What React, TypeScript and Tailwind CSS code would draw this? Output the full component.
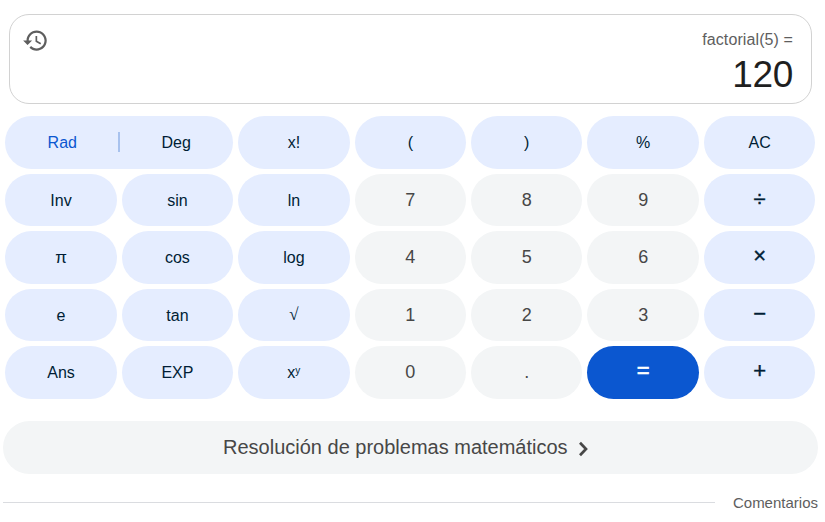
import type { ReactNode } from "react";
import clsx from "clsx";

type Kind = "fn" | "digit" | "op" | "equals";

interface Key {
  label: ReactNode;
  name: string;
  kind: Kind;
}

const key = (name: string, kind: Kind, label: ReactNode = name): Key => ({ name, kind, label });

const power = (
  <span className="flex">
    x<span className="text-[10px] leading-5">y</span>
  </span>
);

const keys: Key[] = [
  key("x!", "fn"), key("(", "fn"), key(")", "fn"), key("%", "fn"), key("AC", "fn"),
  key("Inv", "fn"), key("sin", "fn"), key("ln", "fn"), key("7", "digit"), key("8", "digit"), key("9", "digit"), key("÷", "op"),
  key("π", "fn", <span className="-mt-0.5 text-[17px]">π</span>), key("cos", "fn"), key("log", "fn"), key("4", "digit"), key("5", "digit"), key("6", "digit"), key("×", "op"),
  key("e", "fn"), key("tan", "fn"), key("√", "fn", <span className="-mt-0.5 font-[Liberation_Serif] text-[17px]">√</span>), key("1", "digit"), key("2", "digit"), key("3", "digit"), key("−", "op"),
  key("Ans", "fn"), key("EXP", "fn"), key("xy", "fn", power), key("0", "digit"), key(".", "digit"), key("=", "equals"), key("+", "op"),
];

const styles: Record<Kind, string> = {
  fn: "bg-[#e5edff] pt-0.5 text-base text-[#001d35]",
  digit: "bg-[#f3f5f6] text-lg text-[#474747]",
  op: "bg-[#e5edff] pb-[3px] text-[22px] text-[#001d35] [-webkit-text-stroke:0.4px]",
  equals: "bg-[#0b57d0] pb-[3px] text-[22px] text-white [-webkit-text-stroke:0.6px]",
};

function Display() {
  return (
    <div className="ml-[9px] flex h-[90px] w-[803px] justify-between rounded-[20px] border border-[#d2d2d2] pt-[14px] pr-[18px] pl-[14px]">
      <svg viewBox="0 0 24 24" className="-mt-0.5 -ml-[2px] h-[27px] w-[27px] fill-[#5e5e5e]">
        <path d="M13 3c-4.97 0-9 4.03-9 9H1l3.89 3.89.07.14L9 12H6c0-3.87 3.13-7 7-7s7 3.13 7 7-3.13 7-7 7c-1.93 0-3.68-.79-4.94-2.06l-1.42 1.42C8.27 19.99 10.51 21 13 21c4.97 0 9-4.03 9-9s-4.03-9-9-9zm-1 5v5l4.28 2.54.72-1.21-3.5-2.08V8H12z" />
      </svg>
      <div className="text-right">
        <div className="text-base leading-[22px] tracking-[0.1px] text-[#5e5e5e]">factorial(5) =</div>
        <div className="text-[37px] leading-[48px] tracking-[-0.3px] text-[#1f1f1f]">120</div>
      </div>
    </div>
  );
}

export default function App() {
  return (
    <main className="h-[522px] w-[825px] overflow-hidden bg-white pt-[14px] font-['Liberation_Sans',Arial,sans-serif]">
      <Display />
      <div className="mt-3 ml-[5.3px] grid h-[282.6px] w-[810px] grid-cols-7 grid-rows-5 gap-[5px]">
        <div className="col-span-2 flex items-center rounded-full bg-[#e5edff] text-base text-[#001d35]">
          <button className="flex-1 pt-0.5 pl-px text-[#0b57d0]">Rad</button>
          <span className="h-5 w-0.5 bg-[#a8c2ee]" />
          <button className="flex-1 pt-0.5 pr-px">Deg</button>
        </div>
        {keys.map((k) => (
          <button key={k.name} className={clsx("flex items-center justify-center rounded-full", styles[k.kind])}>
            {k.label}
          </button>
        ))}
      </div>
      <button className="mt-[22px] ml-[3px] flex h-[53px] w-[815px] items-center rounded-full bg-[#f3f5f6] pl-[220px] text-xl text-[#474747]">
        Resolución de problemas matemáticos
        <svg viewBox="0 0 10 16" className="mt-[3px] ml-[10px] h-4 w-[10px] fill-none stroke-[#474747] stroke-[2.7]">
          <path d="M2 1.8 8 8l-6 6.2" />
        </svg>
      </button>
      <div className="mt-[18px] ml-[3px] flex h-[22px] w-[815px] items-center justify-between">
        <span className="h-px w-[712px] bg-[#dadce0]" />
        <span className="pt-0.5 text-[15px] text-[#5e5e5e]">Comentarios</span>
      </div>
    </main>
  );
}
